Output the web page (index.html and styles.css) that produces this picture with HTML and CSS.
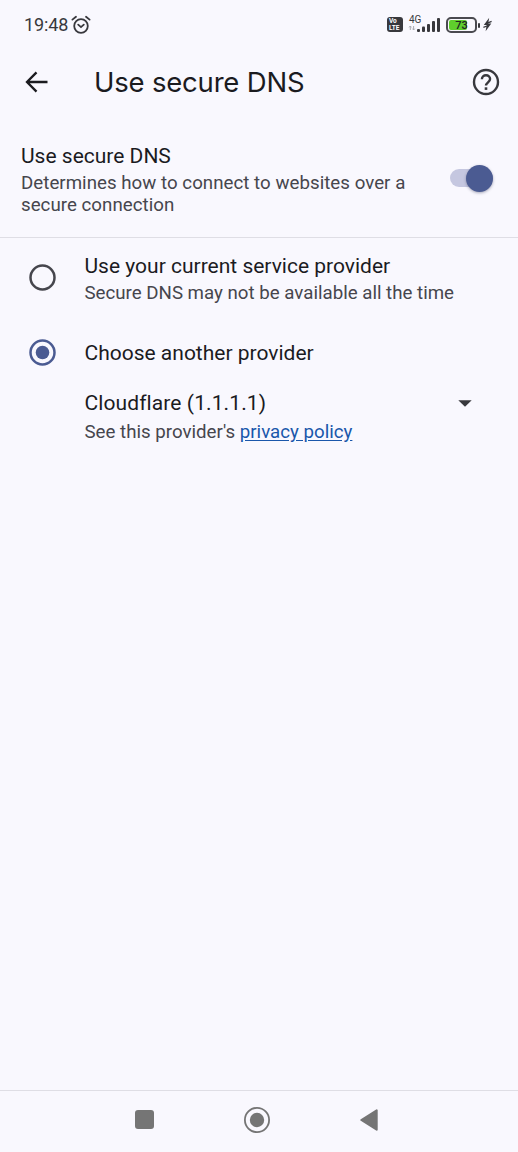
FILE: index.html
```html
<!DOCTYPE html>
<html lang="en">
<head>
<meta charset="utf-8">
<title>Use secure DNS</title>
<link rel="stylesheet" href="styles.css">
</head>
<body>
<div class="screen">
  <div class="status-bar">
    <span class="clock">19:48</span>
    <svg class="alarm" width="20" height="20" viewBox="0 0 20 20" fill="none" stroke="#38383d" stroke-width="1.8" stroke-linecap="round"><circle cx="10" cy="11" r="6.8"/><path d="M1.4 4.6 5 1.7M18.6 4.6 15 1.7M7.2 9.6 10 12.1l2.8-2.5"/></svg>
    <div class="indicators">
      <span class="volte"><span>Vo</span><span>LTE</span></span>
      <span class="network">
        <span class="network-type">4G</span>
        <svg width="33" height="16" viewBox="0 0 33 16"><path d="M2.3 9v4M1.1 10.4 2.3 9l1.2 1.4M5.6 9v4M4.4 11.6l1.2 1.4 1.2-1.4" fill="none" stroke="#aaaab0" stroke-width="1"/><g fill="#38383d"><rect x="9" y="12" width="3" height="3" rx="1"/><rect x="14" y="9.5" width="3" height="5.5" rx="1"/><rect x="19" y="7" width="3" height="8" rx="1"/><rect x="24" y="4" width="3" height="11" rx="1"/><rect x="29" y="1" width="3" height="14" rx="1"/></g></svg>
      </span>
      <span class="battery"><span class="battery-level"></span><span class="battery-text">73</span></span>
      <svg class="bolt" width="9" height="15" viewBox="0 0 9 15"><path d="M6.2.8.8 7.9h2.9L2.6 14.2 8.3 6.6H5.2z" fill="#38383d"/><path d="M.4 10.3 4 9M8.6 4.4 5 5.8" stroke="#38383d" stroke-width="1.3"/></svg>
    </div>
  </div>

  <header class="app-bar">
    <svg width="24" height="22" viewBox="0 0 24 22" fill="none" stroke="#1b1b1f" stroke-width="2.3"><path d="M11.5 1.4 2 11l9.5 9.6M2 11h20.5"/></svg>
    <h1 class="title">Use secure DNS</h1>
    <svg class="help" width="28" height="28" viewBox="0 0 28 28" fill="none" stroke="#38383d" stroke-width="2.4"><circle cx="14" cy="14" r="12"/><path d="M9.9 11.3c0-2.5 1.8-4 4.1-4s4.1 1.5 4.1 3.8c0 3-4.1 3.5-4.1 6.5"/><path d="M14 19.3v2.6" stroke-width="2.6"/></svg>
  </header>

  <section class="switch-row">
    <div class="switch-copy">
      <div class="label">Use secure DNS</div>
      <div class="hint">Determines how to connect to websites over a<br>secure connection</div>
    </div>
    <div class="switch"><span class="thumb"></span></div>
  </section>

  <main class="options">
    <div class="option first">
      <svg class="radio" width="27" height="27" viewBox="0 0 27 27"><circle cx="13.5" cy="13.5" r="12" fill="none" stroke="#46464d" stroke-width="2.5"/></svg>
      <div>
        <div class="label">Use your current service provider</div>
        <div class="hint secondary">Secure DNS may not be available all the time</div>
      </div>
    </div>
    <div class="option second">
      <svg class="radio" width="27" height="27" viewBox="0 0 27 27"><circle cx="13.5" cy="13.5" r="12" fill="none" stroke="#4b5b92" stroke-width="2.5"/><circle cx="13.5" cy="13.5" r="6.8" fill="#4b5b92"/></svg>
      <div class="label">Choose another provider</div>
    </div>
    <div class="provider">
      <div class="select"><span class="label address">Cloudflare (1.1.1.1)</span><svg width="14" height="7" viewBox="0 0 14 7"><path d="M.3.2h13.4L7 6.8z" fill="#38383d"/></svg></div>
      <div class="hint policy">See this provider's <a class="link">privacy policy</a></div>
    </div>
  </main>

  <nav class="nav-bar">
    <svg width="19" height="19" viewBox="0 0 19 19"><rect width="19" height="19" rx="3" fill="#757575"/></svg>
    <svg width="26" height="26" viewBox="0 0 26 26"><circle cx="13" cy="13" r="12.1" fill="none" stroke="#757575" stroke-width="1.8"/><circle cx="13" cy="13" r="7.2" fill="#757575"/></svg>
    <svg width="18" height="22" viewBox="0 0 18 22"><path d="M1.3 11 16.7 1.3v19.4z" fill="#757575" stroke="#757575" stroke-width="2" stroke-linejoin="round"/></svg>
  </nav>
</div>
</body>
</html>
```
FILE: styles.css
```css
* { box-sizing: border-box; }
body { margin: 0; background: #f9f8fe; font-family: Roboto, sans-serif; color: #1b1b1f; }
svg { display: block; flex: none; }
.screen { width: 518px; height: 1152px; display: flex; flex-direction: column; }

.status-bar { height: 50px; padding: 0 26px 1px 24px; display: flex; align-items: center; color: #38383d; }
.clock { font-size: 18px; width: 47px; white-space: nowrap; letter-spacing: -0.1px; }
.indicators { margin-left: auto; display: flex; align-items: center; }
.volte { width: 16px; height: 15px; border-radius: 3px; background: #38383d; color: #fff; font-size: 6.5px; font-weight: 700; line-height: 6.5px; display: flex; flex-direction: column; justify-content: center; padding-left: 2px; margin-right: 5px; }
.network { width: 33px; height: 16px; position: relative; margin-right: 5px; }
.network-type { position: absolute; left: 1px; top: -2px; font-size: 10px; line-height: 9px; }
.battery { position: relative; width: 31px; height: 16px; border: 2px solid #4a4a50; border-radius: 5px; margin-right: 6px; padding: 1px; }
.battery::after { content: ""; position: absolute; right: -5px; top: 4px; width: 2px; height: 5px; border-radius: 1px; background: #38383d; }
.battery-level { display: block; width: 18px; height: 10px; border-radius: 2px; background: #5fce2c; }
.battery-text { position: absolute; inset: 0; text-align: center; font-size: 11px; font-weight: 500; line-height: 13px; color: #202522; }

.app-bar { height: 64px; padding: 0 18px 0 25px; display: flex; align-items: center; }
.title { margin: 0 0 0 45px; font-family: Inter, sans-serif; font-size: 27.5px; font-weight: 400; line-height: 36px; letter-spacing: -0.2px; white-space: nowrap; }
.help { margin-left: auto; }

.switch-row { height: 124px; padding: 29px 25px 0 21px; border-bottom: 1px solid #dfdee5; display: flex; justify-content: space-between; }
.label { font-size: 21px; line-height: 26px; white-space: nowrap; }
.hint { font-size: 18.7px; line-height: 22px; color: #46464d; white-space: nowrap; }
.switch-copy .hint { margin-top: 3px; letter-spacing: 0.03px; }
.switch { width: 43px; height: 18px; margin-top: 26px; border-radius: 9px; background: #c5c7e0; display: flex; justify-content: flex-end; align-items: center; }
.thumb { width: 27px; height: 27px; flex: none; border-radius: 50%; background: #4b5b92; box-shadow: 0 1px 3px rgba(40, 45, 80, .4); }

.options { flex: 1; }
.option { display: flex; padding-left: 28.5px; }
.first { padding-top: 15px; height: 102px; }
.radio { margin-right: 29px; margin-top: -1px; }
.first .radio { margin-top: 11px; }
.secondary { margin-top: 3px; }
.provider { padding: 24px 46px 0 84.5px; }
.select { display: flex; align-items: center; justify-content: space-between; }
.address { letter-spacing: 0.1px; }
.policy { margin-top: 5px; }
.link { color: #1a57ab; text-decoration: underline; text-underline-offset: 2px; }

.nav-bar { height: 62px; border-top: 1px solid #dfdee5; padding: 0 140px 4px 135px; display: flex; align-items: center; justify-content: space-between; }
```
